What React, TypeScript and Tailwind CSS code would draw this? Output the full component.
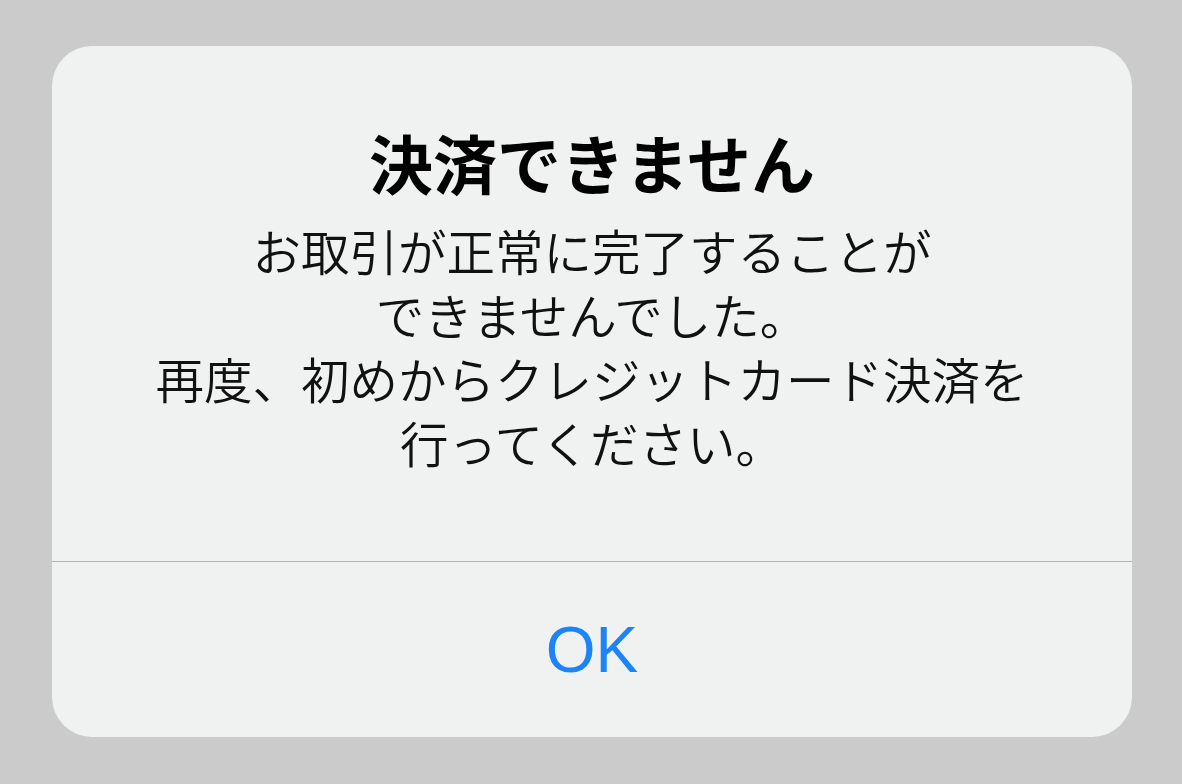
import React from "react";

const jp = '"Noto Sans CJK JP", "Hiragino Sans", sans-serif';

export default function App() {
  const lines = [
    "お取引が正常に完了することが",
    "できませんでした。",
    "再度、初めからクレジットカード決済を",
    "行ってください。",
  ];
  return (
    <div className="w-[1182px] h-[784px] bg-[#cbcbcb] pt-[46px] pl-[52px]">
      <div className="w-[1080px] h-[691px] rounded-[40px] bg-[#f0f1f1] flex flex-col overflow-hidden">
        <div className="flex flex-col items-center pt-[79px] pb-[87px]" style={{ fontFamily: jp }}>
          <h1 className="text-[64px] leading-[72px] font-bold text-black">決済できません</h1>
          <div className="mt-[21px] flex flex-col items-center text-[48.5px] leading-[64px] font-[350] text-[#111111]">
            {lines.map((l) => (
              <p key={l}>{l}</p>
            ))}
          </div>
        </div>
        <div className="h-px bg-[#b2b2b2]" />
        <button
          className="flex-1 flex items-center justify-center text-[#1b84f7] text-[64px]"
          style={{ fontFamily: '"Liberation Sans", Arial, sans-serif' }}
        >
          OK
        </button>
      </div>
    </div>
  );
}
